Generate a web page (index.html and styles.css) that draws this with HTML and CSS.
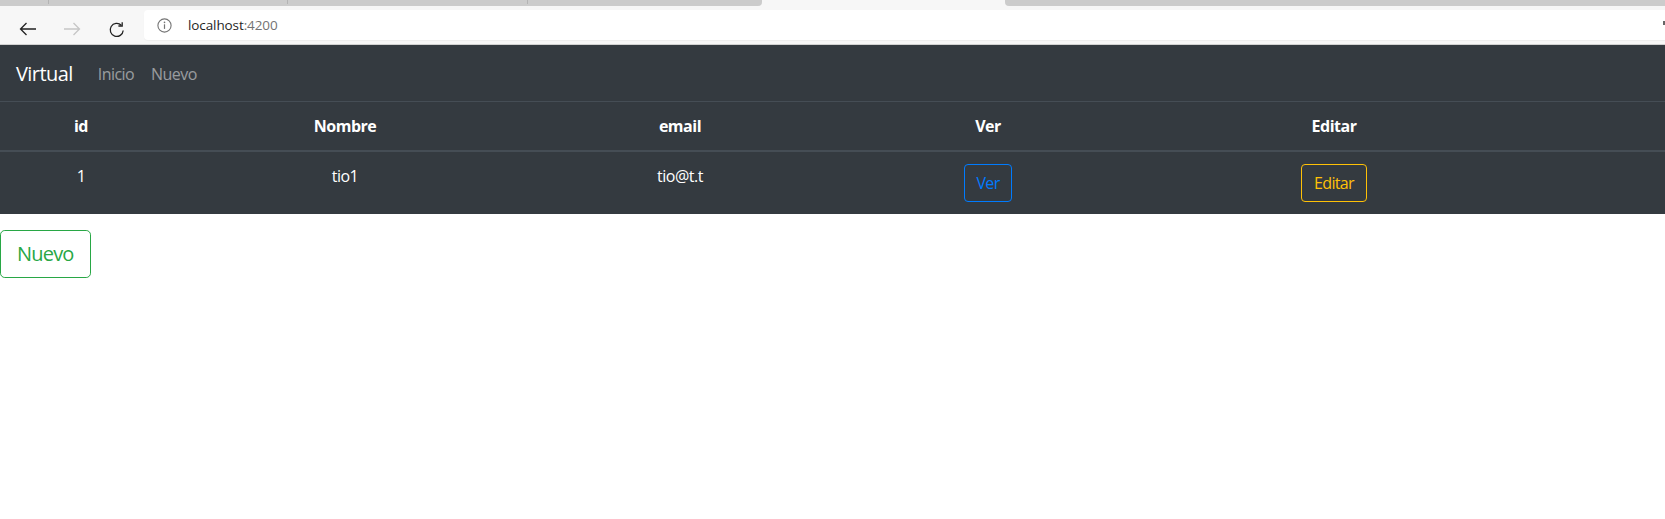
FILE: index.html
```html
<!DOCTYPE html>
<html lang="es">
<head>
<meta charset="utf-8">
<title>Virtual</title>
<link rel="stylesheet" href="styles.css">
</head>
<body>
<div class="chrome">
  <div class="tabstrip">
    <div class="tab-bg tab-left"><span class="tick t1"></span><span class="tick t2"></span><span class="tick t3"></span></div>
    <div class="tab-active"></div>
    <div class="tab-bg tab-right"></div>
  </div>
  <div class="toolbar">
    <span class="tb-btn back">
      <svg width="18" height="18" viewBox="0 0 18 18"><path d="M17 9H1.5M7.5 3L1.5 9l6 6" fill="none" stroke="#222" stroke-width="1.3"/></svg>
    </span>
    <span class="tb-btn fwd">
      <svg width="18" height="18" viewBox="0 0 18 18"><path d="M1 9h15.5M10.5 3l6 6-6 6" fill="none" stroke="#c6c6c6" stroke-width="1.3"/></svg>
    </span>
    <span class="tb-btn reload">
      <svg width="18" height="18" viewBox="0 0 18 18"><path d="M15.2 9.5A6.5 6.5 0 1 1 13.3 4.3" fill="none" stroke="#222" stroke-width="1.3"/><path d="M14.2 1.2v3.8h-3.8" fill="none" stroke="#222" stroke-width="1.3"/></svg>
    </span>
    <div class="omnibox">
      <svg class="info" width="15" height="15" viewBox="0 0 15 15"><circle cx="7.5" cy="7.5" r="6.6" fill="none" stroke="#757575" stroke-width="1.1"/><path d="M7.5 6.3v4.6" stroke="#757575" stroke-width="1.2"/><circle cx="7.5" cy="4.4" r="0.8" fill="#757575"/></svg>
      <span class="url"><span class="host">localhost</span><span class="port">:4200</span></span>
      <span class="edge-mark"></span>
    </div>
  </div>
</div>

<nav class="navbar">
  <a class="brand">Virtual</a>
  <a class="nav-link">Inicio</a>
  <a class="nav-link">Nuevo</a>
</nav>

<table class="table">
  <colgroup>
    <col class="c1"><col class="c2"><col class="c3"><col class="c4"><col class="c5"><col class="c6">
  </colgroup>
  <thead>
    <tr><th>id</th><th>Nombre</th><th>email</th><th>Ver</th><th>Editar</th><th></th></tr>
  </thead>
  <tbody>
    <tr>
      <td>1</td>
      <td>tio1</td>
      <td>tio@t.t</td>
      <td><button class="btn btn-primary-o">Ver</button></td>
      <td><button class="btn btn-warning-o">Editar</button></td>
      <td></td>
    </tr>
  </tbody>
</table>

<button class="btn btn-lg btn-success-o">Nuevo</button>
</body>
</html>
```
FILE: styles.css
```css
html, body {
  margin: 0;
  padding: 0;
  background: #fff;
  font-family: "Open Sans", "Liberation Sans", sans-serif;
  font-size: 16px;
  line-height: 1.5;
  color: #212529;
}

/* browser chrome */
.chrome {
  background: #f7f7f7;
}
.tabstrip {
  display: flex;
  height: 6px;
}
.tab-bg {
  background: #cccccc;
  position: relative;
}
.tab-left {
  width: 762px;
  border-bottom-right-radius: 4px;
}
.tab-right {
  flex: 1;
  border-bottom-left-radius: 4px;
}
.tab-active {
  width: 243px;
  background: #f7f7f7;
}
.tick {
  position: absolute;
  top: 0;
  width: 1px;
  height: 4px;
  background: #b4b4b4;
}
.t1 { left: 48px; }
.t2 { left: 287px; }
.t3 { left: 527px; }

.toolbar {
  display: flex;
  align-items: flex-start;
  height: 38px;
  border-bottom: 1px solid #d2d2d2;
  padding-left: 19px;
}
.tb-btn {
  display: flex;
  width: 18px;
  height: 18px;
  margin-top: 14px;
}
.fwd { margin-left: 26px; }
.reload { margin-left: 27px; margin-top: 15px; }
.omnibox {
  flex: 1;
  display: flex;
  align-items: center;
  height: 30px;
  margin-top: 4px;
  margin-left: 18px;
  background: #fff;
  border-radius: 4px 0 0 4px;
  box-shadow: 0 1px 1px rgba(0,0,0,0.04);
  position: relative;
}
.info {
  margin-left: 13px;
}
.url {
  margin-left: 16px;
  font-size: 13.5px;
  letter-spacing: -0.1px;
  line-height: 20px;
}
.host { color: #1f1f1f; }
.port { color: #737373; }
.edge-mark {
  position: absolute;
  right: 0;
  top: 11px;
  width: 2px;
  height: 4px;
  background: #666;
}

/* navbar */
.navbar {
  display: flex;
  align-items: center;
  height: 40px;
  padding: 8px 16px;
  background: #343a40;
  letter-spacing: -0.035em;
}
.brand {
  font-size: 20px;
  line-height: 30px;
  padding: 6px 0 4px;
  margin-right: 17px;
  color: #fff;
}
.nav-link {
  padding: 9px 9px 7px 8px;
  color: rgba(255,255,255,0.5);
  line-height: 24px;
}

/* table */
.table {
  width: 100%;
  border-collapse: collapse;
  background: #343a40;
  color: #fff;
  table-layout: fixed;
  letter-spacing: -0.03em;
}
.c1 { width: 162px; }
.c2 { width: 366px; }
.c3 { width: 304px; }
.c4 { width: 312px; }
.c5 { width: 380px; }
.c6 { width: 141px; }
.table th, .table td {
  padding: 12px;
  border-top: 1px solid #454d55;
  text-align: center;
  vertical-align: top;
  line-height: 24px;
}
.table thead th {
  vertical-align: bottom;
  border-bottom: 2px solid #454d55;
  font-weight: 700;
}

/* buttons */
.btn {
  display: inline-block;
  font-family: inherit;
  font-size: 16px;
  line-height: 24px;
  padding: 6px 12px;
  border: 1px solid transparent;
  border-radius: 4px;
  background: transparent;
  letter-spacing: -0.04em;
  cursor: pointer;
}
.btn-primary-o { color: #007bff; border-color: #007bff; padding: 6px 11px; }
.btn-warning-o { color: #ffc107; border-color: #ffc107; }
.btn-lg {
  font-size: 20px;
  line-height: 30px;
  padding: 8px 16px;
  border-radius: 4.8px;
}
.btn-success-o {
  color: #28a745;
  border-color: #28a745;
  margin-top: 16px;
}
```
